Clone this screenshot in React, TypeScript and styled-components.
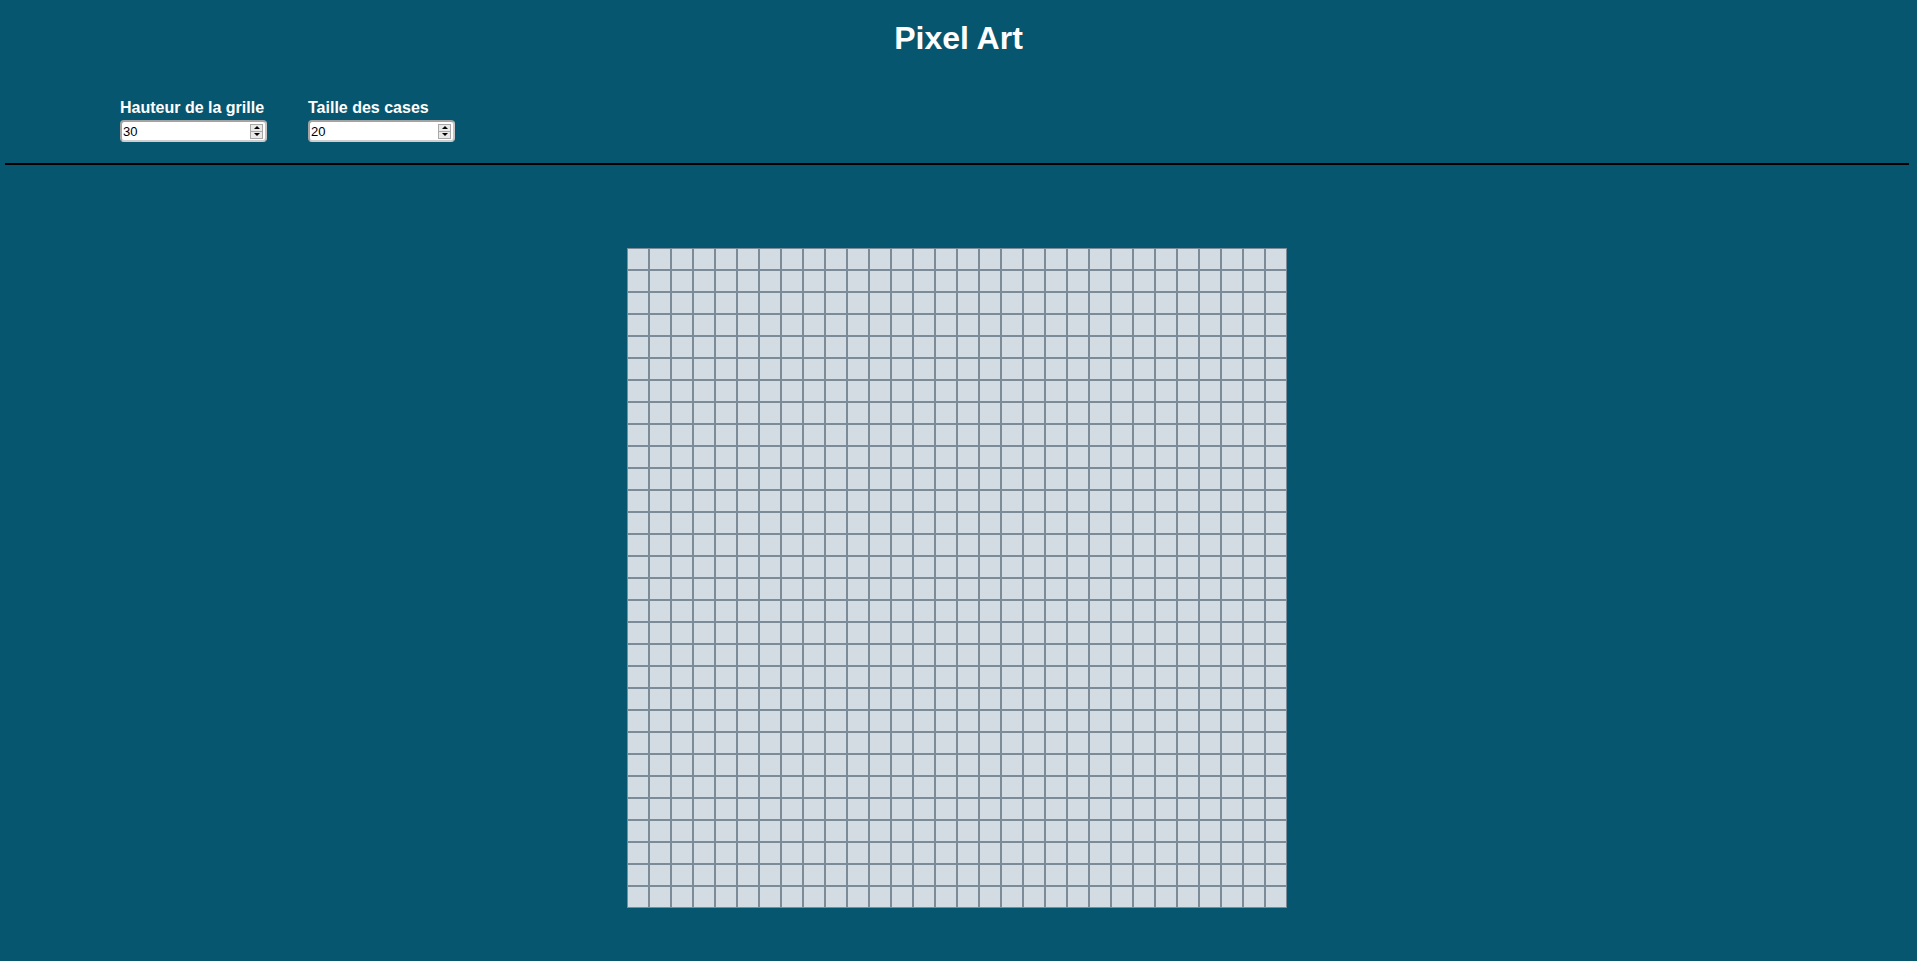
import React from "react";
import styled, { createGlobalStyle } from "styled-components";

const GlobalStyle = createGlobalStyle`
  html, body {
    margin: 0;
    padding: 0;
    background: #07566f;
    font-family: "Liberation Sans", Arial, sans-serif;
  }
`;

const Page = styled.div`
  min-height: 961px;
  background: #07566f;
  display: flex;
  flex-direction: column;
  overflow: hidden;
`;

const Title = styled.h1`
  margin: 20px 0 0;
  font-size: 32px;
  line-height: 36px;
  font-weight: 700;
  color: #ffffff;
  text-align: center;
`;

const Controls = styled.div`
  display: flex;
  gap: 41px;
  margin-top: 43px;
  padding-left: 120px;
`;

const Field = styled.label`
  display: flex;
  flex-direction: column;
  gap: 3px;
`;

const FieldLabel = styled.span`
  font-size: 16px;
  line-height: 18px;
  font-weight: 700;
  color: #ffffff;
  white-space: nowrap;
`;

const InputBox = styled.div`
  display: flex;
  align-items: center;
  width: 147px;
  height: 22px;
  box-sizing: border-box;
  border: 2px solid #a3a3a3;
  border-bottom-color: #cfcfcf;
  border-right-color: #c4c4c4;
  border-radius: 4px;
  background: #ffffff;
  padding: 0 2px 0 0;
`;

const NumberInput = styled.input`
  flex: 1;
  min-width: 0;
  border: none;
  outline: none;
  padding: 0 0 0 1px;
  margin: 0;
  font-family: "Liberation Sans", Arial, sans-serif;
  font-size: 13px;
  color: #000000;
  background: transparent;
  height: 18px;
`;

const Spinner = styled.div`
  display: flex;
  flex-direction: column;
  width: 13px;
  height: 15px;
  border: 1px solid #a8a8a8;
  box-sizing: border-box;
  background: #e9e9e9;
`;

const SpinButton = styled.span<{ $dir: "up" | "down" }>`
  flex: 1;
  display: flex;
  align-items: center;
  justify-content: center;
  border-top: ${(p) => (p.$dir === "down" ? "1px solid #a8a8a8" : "none")};
  &::after {
    content: "";
    width: 0;
    height: 0;
    border-left: 3px solid transparent;
    border-right: 3px solid transparent;
    ${(p) =>
      p.$dir === "up"
        ? "border-bottom: 3px solid #000;"
        : "border-top: 3px solid #000;"}
  }
`;

const Rule = styled.hr`
  margin: 21px 8px 0 5px;
  border: none;
  height: 2px;
  background: #000000;
`;

const Board = styled.div`
  display: flex;
  justify-content: center;
  margin-top: 83px;
  padding-right: 3px;
`;

const Grid = styled.div<{ $size: number; $cols: number }>`
  display: grid;
  grid-template-columns: repeat(${(p) => p.$cols}, ${(p) => p.$size + 2}px);
  grid-auto-rows: ${(p) => p.$size + 2}px;
`;

const Cell = styled.div`
  box-sizing: border-box;
  border: 1px solid #7b8b98;
  background: #d3dce3;
`;

const NumberField: React.FC<{ label: string; value: number }> = ({ label, value }) => (
  <Field>
    <FieldLabel>{label}</FieldLabel>
    <InputBox>
      <NumberInput type="text" defaultValue={String(value)} />
      <Spinner>
        <SpinButton $dir="up" />
        <SpinButton $dir="down" />
      </Spinner>
    </InputBox>
  </Field>
);

export default function App() {
  const rows = 30;
  const cols = 30;
  const size = 20;
  const cells = Array.from({ length: rows * cols }, (_, i) => <Cell key={i} />);
  return (
    <>
      <GlobalStyle />
      <Page>
        <Title>Pixel Art</Title>
        <Controls>
          <NumberField label="Hauteur de la grille" value={30} />
          <NumberField label="Taille des cases" value={20} />
        </Controls>
        <Rule />
        <Board>
          <Grid $size={size} $cols={cols}>
            {cells}
          </Grid>
        </Board>
      </Page>
    </>
  );
}
